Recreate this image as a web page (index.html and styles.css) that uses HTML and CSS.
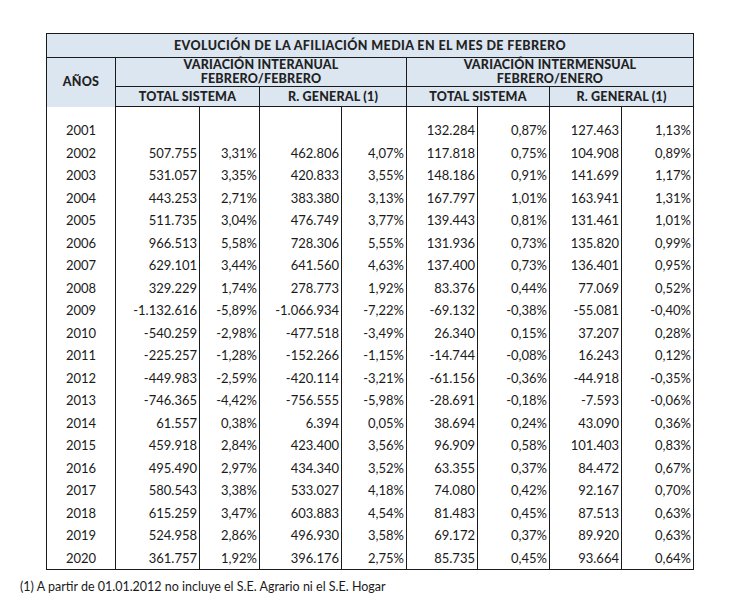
FILE: index.html
```html
<!DOCTYPE html>
<html lang="es">
<head>
<meta charset="utf-8">
<title>Evolución de la afiliación media</title>
<link rel="stylesheet" href="styles.css">
</head>
<body>
<div class="page">
<table class="tbl">
<colgroup>
<col class="c-year"><col class="c1"><col class="c2"><col class="c3"><col class="c4"><col class="c5"><col class="c6"><col class="c7"><col class="c8">
</colgroup>
<thead>
<tr class="h-title"><th colspan="9">EVOLUCIÓN DE LA AFILIACIÓN MEDIA EN EL MES DE FEBRERO</th></tr>
<tr class="h-group">
<th rowspan="2" class="h-years">AÑOS</th>
<th colspan="4">VARIACIÓN INTERANUAL<br>FEBRERO/FEBRERO</th>
<th colspan="4">VARIACIÓN INTERMENSUAL<br>FEBRERO/ENERO</th>
</tr>
<tr class="h-sub">
<th colspan="2">TOTAL SISTEMA</th>
<th colspan="2">R. GENERAL (1)</th>
<th colspan="2">TOTAL SISTEMA</th>
<th colspan="2">R. GENERAL (1)</th>
</tr>
</thead>
<tbody>
<tr class="spacer"><td></td><td></td><td></td><td></td><td></td><td></td><td></td><td></td><td></td></tr>
<tr><td>2001</td><td></td><td></td><td></td><td></td><td>132.284</td><td>0,87%</td><td>127.463</td><td>1,13%</td></tr>
<tr><td>2002</td><td>507.755</td><td>3,31%</td><td>462.806</td><td>4,07%</td><td>117.818</td><td>0,75%</td><td>104.908</td><td>0,89%</td></tr>
<tr><td>2003</td><td>531.057</td><td>3,35%</td><td>420.833</td><td>3,55%</td><td>148.186</td><td>0,91%</td><td>141.699</td><td>1,17%</td></tr>
<tr><td>2004</td><td>443.253</td><td>2,71%</td><td>383.380</td><td>3,13%</td><td>167.797</td><td>1,01%</td><td>163.941</td><td>1,31%</td></tr>
<tr><td>2005</td><td>511.735</td><td>3,04%</td><td>476.749</td><td>3,77%</td><td>139.443</td><td>0,81%</td><td>131.461</td><td>1,01%</td></tr>
<tr><td>2006</td><td>966.513</td><td>5,58%</td><td>728.306</td><td>5,55%</td><td>131.936</td><td>0,73%</td><td>135.820</td><td>0,99%</td></tr>
<tr><td>2007</td><td>629.101</td><td>3,44%</td><td>641.560</td><td>4,63%</td><td>137.400</td><td>0,73%</td><td>136.401</td><td>0,95%</td></tr>
<tr><td>2008</td><td>329.229</td><td>1,74%</td><td>278.773</td><td>1,92%</td><td>83.376</td><td>0,44%</td><td>77.069</td><td>0,52%</td></tr>
<tr><td>2009</td><td>-1.132.616</td><td>-5,89%</td><td>-1.066.934</td><td>-7,22%</td><td>-69.132</td><td>-0,38%</td><td>-55.081</td><td>-0,40%</td></tr>
<tr><td>2010</td><td>-540.259</td><td>-2,98%</td><td>-477.518</td><td>-3,49%</td><td>26.340</td><td>0,15%</td><td>37.207</td><td>0,28%</td></tr>
<tr><td>2011</td><td>-225.257</td><td>-1,28%</td><td>-152.266</td><td>-1,15%</td><td>-14.744</td><td>-0,08%</td><td>16.243</td><td>0,12%</td></tr>
<tr><td>2012</td><td>-449.983</td><td>-2,59%</td><td>-420.114</td><td>-3,21%</td><td>-61.156</td><td>-0,36%</td><td>-44.918</td><td>-0,35%</td></tr>
<tr><td>2013</td><td>-746.365</td><td>-4,42%</td><td>-756.555</td><td>-5,98%</td><td>-28.691</td><td>-0,18%</td><td>-7.593</td><td>-0,06%</td></tr>
<tr><td>2014</td><td>61.557</td><td>0,38%</td><td>6.394</td><td>0,05%</td><td>38.694</td><td>0,24%</td><td>43.090</td><td>0,36%</td></tr>
<tr><td>2015</td><td>459.918</td><td>2,84%</td><td>423.400</td><td>3,56%</td><td>96.909</td><td>0,58%</td><td>101.403</td><td>0,83%</td></tr>
<tr><td>2016</td><td>495.490</td><td>2,97%</td><td>434.340</td><td>3,52%</td><td>63.355</td><td>0,37%</td><td>84.472</td><td>0,67%</td></tr>
<tr><td>2017</td><td>580.543</td><td>3,38%</td><td>533.027</td><td>4,18%</td><td>74.080</td><td>0,42%</td><td>92.167</td><td>0,70%</td></tr>
<tr><td>2018</td><td>615.259</td><td>3,47%</td><td>603.883</td><td>4,54%</td><td>81.483</td><td>0,45%</td><td>87.513</td><td>0,63%</td></tr>
<tr><td>2019</td><td>524.958</td><td>2,86%</td><td>496.930</td><td>3,58%</td><td>69.172</td><td>0,37%</td><td>89.920</td><td>0,63%</td></tr>
<tr><td>2020</td><td>361.757</td><td>1,92%</td><td>396.176</td><td>2,75%</td><td>85.735</td><td>0,45%</td><td>93.664</td><td>0,64%</td></tr>
</tbody>
</table>
<p class="note">(1) A partir de 01.01.2012 no incluye el S.E. Agrario ni el S.E. Hogar</p>
</div>
</body>
</html>
```

FILE: styles.css
```css
html, body {
  margin: 0;
  padding: 0;
  background: #ffffff;
}

body {
  font-family: "Lato", "Liberation Sans", sans-serif;
  color: #1a1a1a;
}

.page {
  padding: 33px 0 0 20px;
}

.tbl {
  margin-left: 26px;
  border-collapse: collapse;
  table-layout: fixed;
  width: 648px;
  font-size: 13px;
}

.c-year { width: 69px; }
.c1 { width: 84px; }
.c2 { width: 60px; }
.c3 { width: 82px; }
.c4 { width: 65px; }
.c5 { width: 71px; }
.c6 { width: 72px; }
.c7 { width: 72px; }
.c8 { width: 72px; }

.tbl th {
  background: #dce6f1;
  border: 1px solid #1a1a1a;
  font-weight: 900;
  font-size: 12.5px;
  line-height: 14px;
  letter-spacing: 0.2px;
  padding: 0;
  text-align: center;
  color: #222222;
}

.h-title th {
  height: 23px;
  letter-spacing: 0.4px;
}
.h-group th { height: 28px; }
.h-sub th { height: 19px; }

.tbl th.h-years {
  border-bottom: none;
}

.tbl td {
  border-left: 1px solid #1a1a1a;
  border-right: 1px solid #1a1a1a;
  padding: 0 2px 0 0;
  height: 22.5px;
  line-height: 14px;
  text-align: right;
  white-space: nowrap;
}

.tbl tbody tr:last-child td {
  border-bottom: 1px solid #1a1a1a;
  height: 22px;
}

.tbl td:first-child {
  text-align: center;
  padding: 0;
}

.tbl tr.spacer td {
  height: 12px;
}

.note {
  margin: 9px 0 0 0;
  font-size: 12.5px;
  line-height: 15px;
}
```
